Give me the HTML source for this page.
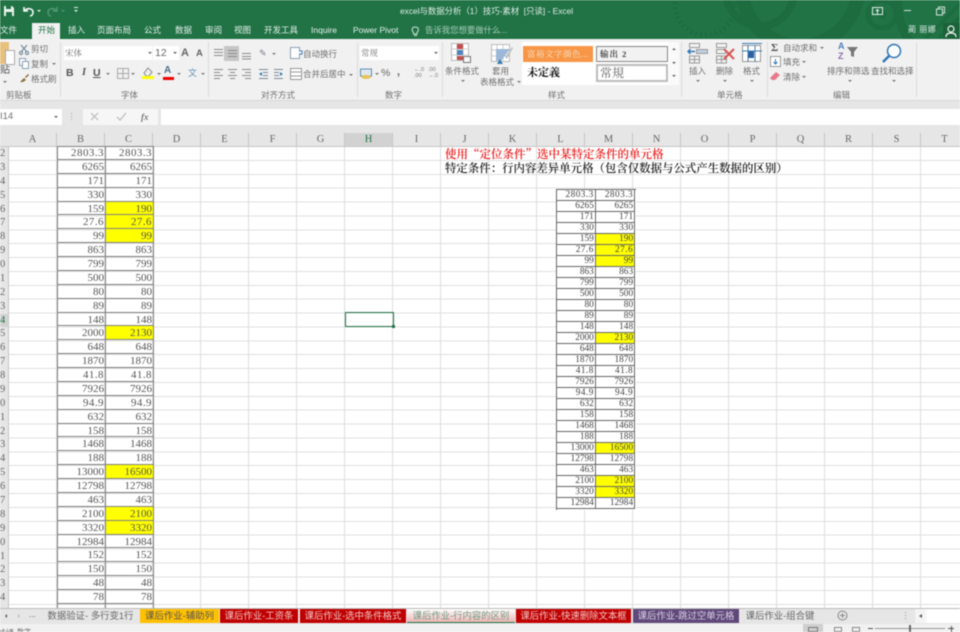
<!DOCTYPE html>
<html lang="zh"><head><meta charset="utf-8"><title>Excel</title>
<style>
html,body{margin:0;padding:0;width:960px;height:632px;overflow:hidden;background:#fff}
body{position:relative;font-family:"Liberation Sans","Noto Sans CJK SC",sans-serif;font-size:8.5px;color:#555}
.t{position:absolute;white-space:nowrap;line-height:12px}
.b{position:absolute}
svg{position:absolute;overflow:visible}
#wrap{position:absolute;left:0;top:0;width:960px;height:632px;overflow:hidden;filter:blur(.5px)}
.w{color:#e4efe9;font-size:8.5px}
.g{color:#707070;font-size:8.5px}
.r{display:flex;height:13.88px}
.c{box-sizing:border-box;width:48px;height:13.88px;border-right:1px solid #808080;border-bottom:1px solid #808080;text-align:right;padding-right:1px;font:11px/14px "Liberation Serif",serif;color:#555}
.y{background:#ff0}
.d{letter-spacing:.45px}
.r2{display:flex;height:11.03px}
.c2{box-sizing:border-box;width:39.3px;height:11.03px;border-right:1px solid #666;border-bottom:1px solid #666;text-align:right;padding-right:1px;font:9.3px/11px "Liberation Serif",serif;color:#444}
.hd{position:absolute;top:133px;height:13px;width:48px;text-align:center;font:10.5px/14px "Liberation Serif",serif;color:#666;box-sizing:border-box;border-right:1px solid #c6c6c6}
.rn{position:absolute;left:0;width:8px;text-align:left;font:10.5px/14px "Liberation Serif",serif;color:#666;height:13.88px}
.tab{position:absolute;top:609px;height:14px;font-size:9.4px;line-height:14px;text-align:center;white-space:nowrap;overflow:hidden;font-family:"Liberation Sans","Noto Sans CJK SC",sans-serif}
</style></head><body>
<div id="wrap">
<!-- title bar -->
<div class="b" style="left:0;top:0;width:960px;height:39px;background:#217346"></div>
<svg style="left:660px;top:0" width="300" height="39" fill="none" stroke="#1d6c40">
<circle cx="140" cy="-12" r="58" stroke-width="14"/>
<circle cx="222" cy="14" r="14" stroke-width="5"/>
<circle cx="222" cy="14" r="4" fill="#1d6c40"/>
<circle cx="100" cy="-8" r="34" stroke-width="8"/>
<circle cx="45" cy="5" r="30" stroke-width="5" stroke-dasharray="2 3"/>
<circle cx="300" cy="5" r="62" stroke-width="9"/>
<path d="M265 39L300 4M278 39L300 17" stroke-width="4"/>
</svg>
<svg style="left:3px;top:4px" width="12" height="14"><path d="M1 2h8l2 2v8H1z" fill="#e8f2ec"/><rect x="3" y="2" width="5" height="3" fill="#217346"/><rect x="3" y="8" width="6" height="4" fill="#217346"/></svg>
<svg style="left:22px;top:4px" width="14" height="14" fill="none" stroke="#f3f8f5" stroke-width="1.6"><path d="M2 3v4h4M2.5 7C5 3.5 11 4 11 8.5c0 2-1.500 3.300-3 3.500"/></svg>
<div class="b" style="left:37px;top:10px;border:2px solid transparent;border-top:2px solid #e4efe9"></div>
<svg style="left:46px;top:4px" width="14" height="14" fill="none" stroke="#4f9770" stroke-width="1.5"><path d="M11 3v4H7M10.500 7C8 3.500 2 4 2 8.500c0 2 1.500 3.300 3 3.500"/></svg>
<div class="b" style="left:61px;top:10px;border:2px solid transparent;border-top:2px solid #4f9770"></div>
<div class="b" style="left:74px;top:7px;width:4px;height:1px;background:#e4efe9"></div>
<div class="b" style="left:74px;top:10px;border:2px solid transparent;border-top:2px solid #e4efe9"></div>
<div class="t" style="left:400px;top:5px;font-size:8.4px;color:#dfece5">excel与数据分析（1）技巧-素材&nbsp; [只读] - Excel</div>
<svg style="left:871px;top:6px" width="14" height="11" fill="none" stroke="#dcebe3"><rect x="1.500" y="1.500" width="10" height="7"/><path d="M6.500 8V4M5 5l1.500-1.500L8 5"/></svg>
<div class="b" style="left:904px;top:10px;width:7px;height:1px;background:#cfe2d7"></div>
<svg style="left:935px;top:6px" width="10" height="10" fill="none" stroke="#cfe2d7"><rect x="1.500" y="3" width="6" height="6"/><path d="M3.500 2.500V1h6v6H8"/></svg>
<!-- tabs -->
<div class="t w" style="left:0;top:24px">文件</div>
<div class="b" style="left:32px;top:23px;width:28px;height:17px;background:#f1f1f1"></div>
<div class="t" style="left:38px;top:24px;color:#217346;font-size:8.5px">开始</div>
<div class="t w" style="left:68px;top:24px">插入</div>
<div class="t w" style="left:97px;top:24px">页面布局</div>
<div class="t w" style="left:144px;top:24px">公式</div>
<div class="t w" style="left:175px;top:24px">数据</div>
<div class="t w" style="left:205px;top:24px">审阅</div>
<div class="t w" style="left:234px;top:24px">视图</div>
<div class="t w" style="left:264px;top:24px">开发工具</div>
<div class="t w" style="left:311px;top:24px">Inquire</div>
<div class="t w" style="left:353px;top:24px">Power Pivot</div>
<svg style="left:411px;top:25px" width="9" height="12" fill="none" stroke="#cfe2d7"><path d="M2.500 7.500C1 6 1 4.500 1.500 3.300 2.300 1.500 6 1.500 7 3.300 7.700 4.500 7.500 6 6 7.500V9H2.500zM3 10.500h3"/></svg>
<div class="t" style="left:425px;top:24px;color:#a8cdb8;font-size:8.4px">告诉我您想要做什么...</div>
<div class="t" style="left:908px;top:24px;color:#dcebe3;font-size:8px;letter-spacing:.5px">蔺 丽娜</div>
<div class="b" style="left:943px;top:23px;width:17px;height:16px;background:#1b6239"></div>
<svg style="left:944px;top:25px" width="14" height="13" fill="none" stroke="#eef6f1" stroke-width="1.200"><circle cx="7" cy="4" r="3"/><path d="M2 12c0-3 2-4 5-4s5 1 5 4"/></svg>
<!-- ribbon -->
<div class="b" style="left:0;top:39px;width:960px;height:61px;background:#f1f1f1;border-bottom:1px solid #d8d8d8"></div>
<div class="b" style="left:60px;top:42px;width:1px;height:55px;background:#dcdcdc"></div>
<div class="b" style="left:208px;top:42px;width:1px;height:55px;background:#dcdcdc"></div>
<div class="b" style="left:357px;top:42px;width:1px;height:55px;background:#dcdcdc"></div>
<div class="b" style="left:442px;top:42px;width:1px;height:55px;background:#dcdcdc"></div>
<div class="b" style="left:681px;top:42px;width:1px;height:55px;background:#dcdcdc"></div>
<div class="b" style="left:767px;top:42px;width:1px;height:55px;background:#dcdcdc"></div>
<div class="b" style="left:916px;top:42px;width:1px;height:55px;background:#dcdcdc"></div>
<!-- clipboard -->
<div class="b" style="left:0;top:42px;width:9px;height:22px;background:#e8c17e"></div>
<div class="b" style="left:5px;top:50px;width:10px;height:15px;background:#fff;border:1px solid #aaa;box-sizing:border-box"></div>
<div class="t g" style="left:0;top:65px;color:#555;font-size:10px">贴</div>
<div class="b" style="left:3px;top:81px;border:2px solid transparent;border-top:2px solid #777"></div>
<svg style="left:19px;top:44px" width="10" height="11" fill="none" stroke="#6b8296"><path d="M2 1l6 7M8 1L2 8"/><circle cx="2" cy="9" r="1.500"/><circle cx="8" cy="9" r="1.500"/></svg>
<div class="t g" style="left:31px;top:43px">剪切</div>
<svg style="left:19px;top:58px" width="11" height="11" fill="#fff" stroke="#8aa0b4"><rect x=".5" y=".5" width="6" height="7"/><rect x="3.500" y="3.500" width="6" height="7"/></svg>
<div class="t g" style="left:31px;top:58px">复制</div>
<div class="b" style="left:52px;top:63px;border:2px solid transparent;border-top:2px solid #777"></div>
<svg style="left:19px;top:73px" width="11" height="10"><path d="M1 9l4-4 2 2-3 2zM6 4l3-3 1 1-3 3z" fill="#8a6a3c"/></svg>
<div class="t g" style="left:31px;top:73px">格式刷</div>
<div class="t g" style="left:6px;top:89px">剪贴板</div>
<!-- font -->
<div class="b" style="left:64px;top:46px;width:88px;height:14px;background:#fff"></div>
<div class="t g" style="left:65px;top:47px;font-family:'Liberation Serif','Noto Serif CJK SC',serif">宋体</div>
<div class="b" style="left:148px;top:52px;border:2px solid transparent;border-top:2px solid #666"></div>
<div class="b" style="left:153px;top:46px;width:26px;height:14px;background:#fff"></div>
<div class="t" style="left:155px;top:47px;font-size:10.5px;color:#666">12</div>
<div class="b" style="left:173px;top:52px;border:2px solid transparent;border-top:2px solid #666"></div>
<div class="t" style="left:181px;top:47px;font-size:11px;color:#666;font-weight:bold">A</div>
<div class="t" style="left:196px;top:48px;font-size:9.500px;color:#666;font-weight:bold">A</div>
<div class="t" style="left:66px;top:67px;font:bold 10.5px/12px 'Liberation Sans',sans-serif;color:#555">B</div>
<div class="t" style="left:82px;top:67px;font:italic bold 10.5px/12px 'Liberation Serif',serif;color:#555">I</div>
<div class="t" style="left:93px;top:67px;font:bold 10.5px/12px 'Liberation Sans',sans-serif;color:#555;text-decoration:underline">U</div>
<div class="b" style="left:106px;top:73px;border:2px solid transparent;border-top:2px solid #777"></div>
<svg style="left:117px;top:68px" width="12" height="11" fill="none" stroke="#aaa"><rect x=".5" y=".5" width="11" height="10"/><path d="M6 0v11M0 5.500h12" /></svg>
<div class="b" style="left:131px;top:73px;border:2px solid transparent;border-top:2px solid #777"></div>
<svg style="left:142px;top:67px" width="13" height="12"><path d="M6 1l4 4-3 4H4L2 6z" fill="#eee" stroke="#777" stroke-width=".8"/><rect x="0" y="9" width="12" height="3" fill="#ff0"/></svg>
<div class="b" style="left:157px;top:73px;border:2px solid transparent;border-top:2px solid #777"></div>
<div class="t" style="left:164px;top:65px;font-size:10px;font-weight:bold;color:#4d6e8a">A</div>
<div class="b" style="left:163px;top:77px;width:11px;height:3px;background:#e00"></div>
<div class="b" style="left:177px;top:73px;border:2px solid transparent;border-top:2px solid #777"></div>
<div class="t" style="left:188px;top:67px;font-size:9px;color:#5f8fb0">文</div>
<div class="b" style="left:201px;top:73px;border:2px solid transparent;border-top:2px solid #777"></div>
<div class="t g" style="left:121px;top:89px">字体</div>
<!-- align -->
<div class="b" style="left:224px;top:46px;width:15px;height:15px;background:#c6c6c6"></div>
<svg style="left:213px;top:48px" width="45" height="12" stroke="#8a8a8a"><path d="M1 1.500h9M1 4.500h9M1 7.500h9M15 2.500h9M15 5.500h9M15 8.500h9M29 5.500h9M29 8.500h9M29 11h9" fill="none"/></svg>
<svg style="left:213px;top:68px" width="45" height="11" stroke="#8a8a8a"><path d="M1 1.500h9M1 4.500h6M1 7.500h9M1 10.500h6M15 1.500h9M17 4.500h5M15 7.500h9M17 10.500h5M29 1.500h9M32 4.500h6M29 7.500h9M32 10.500h6" fill="none"/></svg>
<div class="t" style="left:259px;top:47px;font-size:9px;color:#778;">✎</div>
<div class="b" style="left:272px;top:53px;border:2px solid transparent;border-top:2px solid #777"></div>
<svg style="left:258px;top:68px" width="28" height="11" stroke="#7a8a9a" fill="none"><path d="M1 1.500h9M5 4.500h5M5 7.500h5M1 10.500h9M16 1.500h9M16 4.500h5M16 7.500h5M16 10.500h9"/><path d="M1 6l3-2v4zM25 6l-3-2v4z" fill="#3a7db0" stroke="none"/></svg>
<svg style="left:290px;top:47px" width="12" height="13" fill="#fff" stroke="#8aa0b4"><rect x=".5" y=".5" width="9" height="11"/><path d="M9 4h3v3h-3" stroke="#3a7db0"/></svg>
<div class="t g" style="left:303px;top:48px">自动换行</div>
<svg style="left:290px;top:68px" width="12" height="12" fill="#fff" stroke="#999"><rect x=".5" y=".5" width="11" height="11"/><path d="M0 4h12M0 8h12"/></svg>
<div class="t g" style="left:303px;top:68px">合并后居中</div>
<div class="b" style="left:349px;top:74px;border:2px solid transparent;border-top:2px solid #777"></div>
<div class="t g" style="left:261px;top:89px">对齐方式</div>
<!-- number -->
<div class="b" style="left:360px;top:46px;width:79px;height:14px;background:#fff"></div>
<div class="t g" style="left:361px;top:47px;font-family:'Liberation Serif','Noto Serif CJK SC',serif">常规</div>
<div class="b" style="left:434px;top:52px;border:2px solid transparent;border-top:2px solid #666"></div>
<svg style="left:360px;top:68px" width="13" height="12"><rect x=".5" y="1" width="11" height="7" fill="#dfe8ef" stroke="#5f8fb0"/><ellipse cx="6" cy="9" rx="5" ry="2" fill="#e6c45a"/></svg>
<div class="b" style="left:375px;top:73px;border:2px solid transparent;border-top:2px solid #777"></div>
<div class="t" style="left:381px;top:67px;font-size:10.5px;color:#666">%</div>
<div class="t" style="left:397px;top:66px;font-size:11px;font-weight:bold;color:#666">,</div>
<div class="t" style="left:414px;top:68px;font-size:5.500px;line-height:5.500px;color:#777"><span style="color:#3a7db0">←</span>.0<br>.00</div>
<div class="t" style="left:428px;top:68px;font-size:5.500px;line-height:5.500px;color:#777">.00<br><span style="color:#3a7db0">→</span>.0</div>
<div class="t g" style="left:385px;top:89px">数字</div>
<!-- cond format -->
<svg style="left:451px;top:43px" width="20" height="21"><rect x=".5" y=".5" width="17" height="17" fill="#fff" stroke="#bbb"/><path d="M6 1v17M12 1v17M1 6h17M1 12h17" stroke="#ccc"/><rect x="6" y="1" width="6" height="5" fill="#c0504d"/><rect x="6" y="7" width="6" height="5" fill="#4f81bd"/><rect x="6" y="13" width="6" height="4" fill="#c0504d"/><rect x="12.500" y="13.500" width="7" height="6" fill="#f6f6f6" stroke="#777"/></svg>
<div class="t g" style="left:445px;top:65px">条件格式</div>
<div class="b" style="left:461px;top:80px;border:2px solid transparent;border-top:2px solid #777"></div>
<svg style="left:491px;top:44px" width="22" height="21"><rect x=".5" y=".5" width="18" height="17" fill="#fff" stroke="#bbb"/><path d="M6 1v17M12 1v17M1 6h17M1 12h17" stroke="#ccc"/><path d="M5 5h14L10 17H5z" fill="#9cb8d8"/><path d="M14 13l7-10 1 1-6 11z" fill="#c1c1c1"/><path d="M6 20l3-5 3 5z" fill="#3a7db0"/></svg>
<div class="t g" style="left:492px;top:65px">套用</div>
<div class="t g" style="left:480px;top:76px">表格格式</div>
<div class="b" style="left:517px;top:81px;border:2px solid transparent;border-top:2px solid #777"></div>
<div class="t g" style="left:548px;top:89px">样式</div>
<!-- style gallery -->
<div class="b" style="left:522px;top:42px;width:150px;height:43px;background:#fff"></div>
<div class="b" style="left:523px;top:46px;width:70px;height:16px;background:#f79646"></div>
<div class="t" style="left:527px;top:48px;font-size:8.500px;color:#fde4cf;font-family:'Liberation Serif','Noto Serif CJK SC',serif;letter-spacing:.5px">富裕文字颜色...</div>
<div class="b" style="left:596px;top:46px;width:72px;height:16px;box-sizing:border-box;border:1px solid #888;background:#f2f2f2"></div>
<div class="t" style="left:600px;top:48px;font-size:8.500px;color:#444;font-weight:bold;letter-spacing:1px;font-family:'Liberation Serif','Noto Serif CJK SC',serif">输出 2</div>
<div class="t" style="left:527px;top:66px;font-size:11px;line-height:14px;color:#111;font-weight:bold;font-family:'Liberation Serif','Noto Serif CJK SC',serif">未定義</div>
<div class="b" style="left:596px;top:64px;width:72px;height:18px;box-sizing:border-box;border:2px solid #bbb;background:#fff"></div>
<div class="t" style="left:600px;top:66px;font-size:12px;line-height:14px;color:#666;font-family:'Liberation Serif','Noto Serif CJK SC',serif">常規</div>
<div class="b" style="left:669px;top:42px;width:10px;height:43px;background:#fafafa"></div>
<div class="b" style="left:672px;top:46px;border:2px solid transparent;border-bottom:2px solid #666"></div>
<div class="b" style="left:672px;top:62px;border:2px solid transparent;border-top:2px solid #666"></div>
<div class="b" style="left:672px;top:75px;border:2px solid transparent;border-top:2px solid #666"></div>
<!-- cells -->
<svg style="left:687px;top:43px" width="22" height="22" fill="none" stroke="#999"><rect x="2.500" y=".5" width="10" height="4"/><rect x="9.500" y="6.500" width="11" height="4" fill="#c0d0e0"/><rect x="9.500" y="6.500" width="11" height="4"/><path d="M2.500 13h10v7h-10zM7.500 13v7M2.500 16.500h10"/><path d="M8 8.500H1M3.500 6L1 8.500 3.500 11" stroke="#2f76b5" stroke-width="1.400"/></svg>
<div class="t g" style="left:689px;top:65px">插入</div>
<div class="b" style="left:696px;top:80px;border:2px solid transparent;border-top:2px solid #777"></div>
<svg style="left:715px;top:43px" width="22" height="22" fill="none" stroke="#999"><rect x="1.500" y=".5" width="10" height="4"/><rect x="1.500" y="6.500" width="9" height="4"/><path d="M1.500 13h10v7h-10zM6.500 13v7M1.500 16.500h10"/><path d="M9 6l10 10M19 6L9 16" stroke="#d9534f" stroke-width="2"/></svg>
<div class="t g" style="left:716px;top:65px">删除</div>
<div class="b" style="left:723px;top:80px;border:2px solid transparent;border-top:2px solid #777"></div>
<svg style="left:741px;top:42px" width="22" height="23" fill="#fff" stroke="#999"><rect x="1.500" y="3.500" width="18" height="16"/><rect x="7" y="9" width="6" height="7" fill="#2f5f9e" stroke="none"/><path d="M1 1.500h20M7 3v17M14 3v17M1 9h20" stroke="#3a7db0" fill="none"/></svg>
<div class="t g" style="left:743px;top:65px">格式</div>
<div class="b" style="left:750px;top:80px;border:2px solid transparent;border-top:2px solid #777"></div>
<div class="t g" style="left:717px;top:89px">单元格</div>
<!-- edit -->
<div class="t" style="left:771px;top:42px;font:bold 11px/12px 'Liberation Serif',serif;color:#555">Σ</div>
<div class="t g" style="left:783px;top:42px">自动求和</div>
<div class="b" style="left:820px;top:47px;border:2px solid transparent;border-top:2px solid #777"></div>
<svg style="left:770px;top:56px" width="11" height="11" fill="#fff" stroke="#999"><rect x=".5" y=".5" width="10" height="10"/><path d="M5.500 3v5M3.500 6l2 2 2-2" stroke="#2f76b5" fill="none"/></svg>
<div class="t g" style="left:783px;top:56px">填充</div>
<div class="b" style="left:802px;top:61px;border:2px solid transparent;border-top:2px solid #777"></div>
<svg style="left:770px;top:71px" width="11" height="10"><path d="M0 7l6-6 4 3-5 5H2z" fill="#e67a8a"/></svg>
<div class="t g" style="left:783px;top:71px">清除</div>
<div class="b" style="left:802px;top:76px;border:2px solid transparent;border-top:2px solid #777"></div>
<div class="t" style="left:838px;top:42px;font:bold 9px/9px 'Liberation Sans',sans-serif;color:#4f81bd">A</div>
<div class="t" style="left:838px;top:52px;font:bold 9px/9px 'Liberation Sans',sans-serif;color:#8e6bb0">Z</div>
<svg style="left:847px;top:46px" width="12" height="12"><path d="M0 1h11L7 6v5L4 10V6z" fill="#777"/></svg>
<div class="t g" style="left:827px;top:65px">排序和筛选</div>
<div class="b" style="left:848px;top:80px;border:2px solid transparent;border-top:2px solid #777"></div>
<svg style="left:882px;top:43px" width="21" height="21" fill="none" stroke="#2f76b5"><circle cx="12" cy="8" r="6.500" stroke-width="1.500" fill="#fafcff"/><path d="M7 13l-6 6" stroke-width="2.500"/></svg>
<div class="t g" style="left:871px;top:65px">查找和选择</div>
<div class="b" style="left:892px;top:80px;border:2px solid transparent;border-top:2px solid #777"></div>
<div class="t g" style="left:833px;top:89px">编辑</div>
<!-- formula bar -->
<div class="b" style="left:0;top:101px;width:960px;height:32px;background:#e6e6e6"></div>
<div class="b" style="left:0;top:109px;width:62px;height:16px;background:#fff"></div>
<div class="t g" style="left:0;top:111px;font-size:9.5px">I14</div>
<div class="b" style="left:54px;top:116px;border:2px solid transparent;border-top:2px solid #666"></div>
<div class="b" style="left:71px;top:113px;width:1px;height:8px;background:repeating-linear-gradient(to bottom,#aaa 0 1px,transparent 1px 3px)"></div>
<div class="b" style="left:83px;top:109px;width:75px;height:16px;background:#f6f6f6"></div>
<svg style="left:90px;top:112px" width="40" height="10" fill="none" stroke="#bbb" stroke-width="1.200"><path d="M1 1l7 7M8 1L1 8M27 5l3 3 6-7"/></svg>
<div class="t" style="left:141px;top:111px;font:italic bold 9px/12px 'Liberation Serif',serif;color:#777">fx</div>
<div class="b" style="left:161px;top:109px;width:799px;height:16px;background:#fff"></div>
<!-- column headers -->
<div class="b" style="left:0;top:133px;width:960px;height:13px;background:#e6e6e6;border-bottom:1px solid #c6c6c6"></div>
<div class="b" style="left:345px;top:133px;width:48px;height:13px;background:#d2d2d2"></div>
<div class="hd" style="left:9px">A</div><div class="hd" style="left:57px">B</div><div class="hd" style="left:105px">C</div><div class="hd" style="left:153px">D</div><div class="hd" style="left:201px">E</div><div class="hd" style="left:249px">F</div><div class="hd" style="left:297px">G</div><div class="hd" style="left:345px;color:#217346">H</div><div class="hd" style="left:393px">I</div><div class="hd" style="left:441px">J</div><div class="hd" style="left:489px">K</div><div class="hd" style="left:537px">L</div><div class="hd" style="left:585px">M</div><div class="hd" style="left:633px">N</div><div class="hd" style="left:681px">O</div><div class="hd" style="left:729px">P</div><div class="hd" style="left:777px">Q</div><div class="hd" style="left:825px">R</div><div class="hd" style="left:873px">S</div><div class="hd" style="left:921px">T</div>
<!-- sheet -->
<div class="b" style="left:9px;top:147px;width:951px;height:461px;background-color:#fff;background-image:repeating-linear-gradient(to right,transparent 0 47px,#dcdcdc 47px 48px),repeating-linear-gradient(to bottom,transparent 0 12.88px,#e0e0e0 12.88px 13.88px);"></div>
<!-- row headers -->
<div class="b" style="left:0;top:147px;width:9px;height:461px;background:#e6e6e6;border-right:1px solid #c6c6c6;box-sizing:border-box;overflow:hidden">
<div class="rn" style="top:0">2</div><div class="rn" style="top:13.880px">3</div><div class="rn" style="top:27.760px">4</div><div class="rn" style="top:41.640px">5</div><div class="rn" style="top:55.520px">6</div><div class="rn" style="top:69.400px">7</div><div class="rn" style="top:83.280px">8</div><div class="rn" style="top:97.160px">9</div><div class="rn" style="top:111.040px">0</div><div class="rn" style="top:124.920px">1</div><div class="rn" style="top:138.800px">2</div><div class="rn" style="top:152.680px">3</div><div class="rn" style="top:166.560px;color:#217346;background:#d2d2d2">4</div><div class="rn" style="top:180.440px">5</div><div class="rn" style="top:194.320px">6</div><div class="rn" style="top:208.200px">7</div><div class="rn" style="top:222.080px">8</div><div class="rn" style="top:235.960px">9</div><div class="rn" style="top:249.840px">0</div><div class="rn" style="top:263.720px">1</div><div class="rn" style="top:277.600px">2</div><div class="rn" style="top:291.480px">3</div><div class="rn" style="top:305.360px">4</div><div class="rn" style="top:319.240px">5</div><div class="rn" style="top:333.120px">6</div><div class="rn" style="top:347px">7</div><div class="rn" style="top:360.880px">8</div><div class="rn" style="top:374.760px">9</div><div class="rn" style="top:388.640px">0</div><div class="rn" style="top:402.520px">1</div><div class="rn" style="top:416.400px">2</div><div class="rn" style="top:430.280px">3</div><div class="rn" style="top:444.160px">4</div>
</div>
<!-- left table -->
<div class="b" style="left:57px;top:146px;width:97px;height:462px;overflow:hidden;border-left:1px solid #808080;box-sizing:border-box">
<div style="width:96px;border-top:1px solid #808080;height:0"></div>
<div class="r" style="margin-top:-1px"><div class="c d">2803.3</div><div class="c d">2803.3</div></div>
<div class="r"><div class="c">6265</div><div class="c">6265</div></div>
<div class="r"><div class="c">171</div><div class="c">171</div></div>
<div class="r"><div class="c">330</div><div class="c">330</div></div>
<div class="r"><div class="c">159</div><div class="c y">190</div></div>
<div class="r"><div class="c d">27.6</div><div class="c y d">27.6</div></div>
<div class="r"><div class="c">99</div><div class="c y">99</div></div>
<div class="r"><div class="c">863</div><div class="c">863</div></div>
<div class="r"><div class="c">799</div><div class="c">799</div></div>
<div class="r"><div class="c">500</div><div class="c">500</div></div>
<div class="r"><div class="c">80</div><div class="c">80</div></div>
<div class="r"><div class="c">89</div><div class="c">89</div></div>
<div class="r"><div class="c">148</div><div class="c">148</div></div>
<div class="r"><div class="c">2000</div><div class="c y">2130</div></div>
<div class="r"><div class="c">648</div><div class="c">648</div></div>
<div class="r"><div class="c">1870</div><div class="c">1870</div></div>
<div class="r"><div class="c d">41.8</div><div class="c d">41.8</div></div>
<div class="r"><div class="c">7926</div><div class="c">7926</div></div>
<div class="r"><div class="c d">94.9</div><div class="c d">94.9</div></div>
<div class="r"><div class="c">632</div><div class="c">632</div></div>
<div class="r"><div class="c">158</div><div class="c">158</div></div>
<div class="r"><div class="c">1468</div><div class="c">1468</div></div>
<div class="r"><div class="c">188</div><div class="c">188</div></div>
<div class="r"><div class="c">13000</div><div class="c y">16500</div></div>
<div class="r"><div class="c">12798</div><div class="c">12798</div></div>
<div class="r"><div class="c">463</div><div class="c">463</div></div>
<div class="r"><div class="c">2100</div><div class="c y">2100</div></div>
<div class="r"><div class="c">3320</div><div class="c y">3320</div></div>
<div class="r"><div class="c">12984</div><div class="c">12984</div></div>
<div class="r"><div class="c">152</div><div class="c">152</div></div>
<div class="r"><div class="c">150</div><div class="c">150</div></div>
<div class="r"><div class="c">48</div><div class="c">48</div></div>
<div class="r"><div class="c">78</div><div class="c">78</div></div>
<div class="r"><div class="c"></div><div class="c"></div></div>
</div>
<!-- heading text -->
<div class="t" style="left:445px;top:148px;font:600 11.500px/13px 'Noto Serif CJK SC',serif;color:#f01818">使用“定位条件”选中某特定条件的单元格</div>
<div class="t" style="left:445px;top:162px;font:600 11.430px/13px 'Noto Serif CJK SC',serif;color:#222">特定条件：行内容差异单元格（包含仅数据与公式产生数据的区别）</div>
<!-- right table -->
<div class="b" style="left:555.500px;top:190px;width:79.600px;height:320px;overflow:hidden;border-left:1px solid #666;border-top:1px solid #666;box-sizing:content-box;background:#fff;margin-top:-1px">
<div class="r2"><div class="c2 d">2803.3</div><div class="c2 d">2803.3</div></div>
<div class="r2"><div class="c2">6265</div><div class="c2">6265</div></div>
<div class="r2"><div class="c2">171</div><div class="c2">171</div></div>
<div class="r2"><div class="c2">330</div><div class="c2">330</div></div>
<div class="r2"><div class="c2">159</div><div class="c2 y">190</div></div>
<div class="r2"><div class="c2 d">27.6</div><div class="c2 y d">27.6</div></div>
<div class="r2"><div class="c2">99</div><div class="c2 y">99</div></div>
<div class="r2"><div class="c2">863</div><div class="c2">863</div></div>
<div class="r2"><div class="c2">799</div><div class="c2">799</div></div>
<div class="r2"><div class="c2">500</div><div class="c2">500</div></div>
<div class="r2"><div class="c2">80</div><div class="c2">80</div></div>
<div class="r2"><div class="c2">89</div><div class="c2">89</div></div>
<div class="r2"><div class="c2">148</div><div class="c2">148</div></div>
<div class="r2"><div class="c2">2000</div><div class="c2 y">2130</div></div>
<div class="r2"><div class="c2">648</div><div class="c2">648</div></div>
<div class="r2"><div class="c2">1870</div><div class="c2">1870</div></div>
<div class="r2"><div class="c2 d">41.8</div><div class="c2 d">41.8</div></div>
<div class="r2"><div class="c2">7926</div><div class="c2">7926</div></div>
<div class="r2"><div class="c2 d">94.9</div><div class="c2 d">94.9</div></div>
<div class="r2"><div class="c2">632</div><div class="c2">632</div></div>
<div class="r2"><div class="c2">158</div><div class="c2">158</div></div>
<div class="r2"><div class="c2">1468</div><div class="c2">1468</div></div>
<div class="r2"><div class="c2">188</div><div class="c2">188</div></div>
<div class="r2"><div class="c2">13000</div><div class="c2 y">16500</div></div>
<div class="r2"><div class="c2">12798</div><div class="c2">12798</div></div>
<div class="r2"><div class="c2">463</div><div class="c2">463</div></div>
<div class="r2"><div class="c2">2100</div><div class="c2 y">2100</div></div>
<div class="r2"><div class="c2">3320</div><div class="c2 y">3320</div></div>
<div class="r2"><div class="c2">12984</div><div class="c2">12984</div></div>
</div>
<!-- selection -->
<div class="b" style="left:345px;top:312px;width:49px;height:15px;box-sizing:border-box;border:1px solid #217346"></div>
<div class="b" style="left:392px;top:325px;width:3px;height:3px;background:#217346"></div>
<!-- sheet tabs -->
<div class="b" style="left:0;top:608px;width:960px;height:16px;background:#e6e6e6;border-top:1px solid #bbb;box-sizing:border-box"></div>
<div class="b" style="left:3px;top:614px;border:2px solid transparent;border-right:2px solid #555"></div>
<div class="b" style="left:18px;top:614px;border:2px solid transparent;border-left:2px solid #bbb"></div>
<div class="t" style="left:29px;top:609px;font-size:8px;color:#555">...</div>
<div class="tab" style="left:42px;width:97px;color:#666;background:#e6e6e6">数据验证- 多行变1行</div>
<div class="tab" style="left:140px;width:79px;background:#ffc000;color:#555">课后作业-辅助列</div>
<div class="tab" style="left:220px;width:78px;background:#c00000;color:#f3c4c4">课后作业-工资条</div>
<div class="tab" style="left:300px;width:106px;background:#c00000;color:#f3c4c4">课后作业-选中条件格式</div>
<div class="tab" style="left:407px;width:108px;height:13px;background:linear-gradient(#fff,#eeb4b4);color:#6f9a80;border-bottom:1px solid #217346">课后作业-行内容的区别</div>
<div class="tab" style="left:516px;width:115px;background:#c00000;color:#f3c4c4">课后作业-快速删除文本框</div>
<div class="tab" style="left:633px;width:106px;background:#60497a;color:#d9d0e4">课后作业-跳过空单元格</div>
<div class="tab" style="left:740px;width:80px;color:#666;background:#e6e6e6">课后作业-组合键</div>
<svg style="left:837px;top:610px" width="11" height="11" fill="none" stroke="#888"><circle cx="5.500" cy="5.500" r="4.500"/><path d="M5.500 3v5M3 5.500h5"/></svg>
<div class="b" style="left:905px;top:612px;width:1px;height:8px;background:repeating-linear-gradient(to bottom,#999 0 1px,transparent 1px 3px)"></div>
<div class="b" style="left:915px;top:609px;width:11px;height:14px;background:#f4f4f4"></div>
<div class="b" style="left:917px;top:614px;border:2px solid transparent;border-right:3px solid #555"></div>
<div class="b" style="left:926px;top:609px;width:34px;height:14px;background:#fff"></div>
<!-- status -->
<div class="b" style="left:0;top:624px;width:960px;height:8px;background:#f1f1f1;overflow:hidden">
<div class="t g" style="left:-3px;top:3px">就绪</div>
<div class="t g" style="left:17px;top:3px;font-size:7px">数字</div>
<div class="b" style="left:803px;top:0;width:20px;height:8px;background:#cfcfcf"></div>
<div class="b" style="left:808px;top:3px;width:10px;height:5px;border:1px solid #777;box-sizing:border-box"></div>
<div class="b" style="left:834px;top:3px;width:8px;height:5px;border:1px solid #888;box-sizing:border-box"></div>
<div class="b" style="left:852px;top:3px;width:8px;height:5px;border:1px solid #888;box-sizing:border-box"></div>
<div class="b" style="left:868px;top:4px;width:5px;height:1px;background:#555"></div>
<div class="b" style="left:875px;top:4px;width:70px;height:1px;background:#999"></div>
<div class="b" style="left:909px;top:1px;width:2px;height:7px;background:#666"></div>
<div class="b" style="left:948px;top:4px;width:6px;height:1px;background:#555"></div>
<div class="b" style="left:950.500px;top:2px;width:1px;height:6px;background:#555"></div>
</div>
</div>
</body></html>
